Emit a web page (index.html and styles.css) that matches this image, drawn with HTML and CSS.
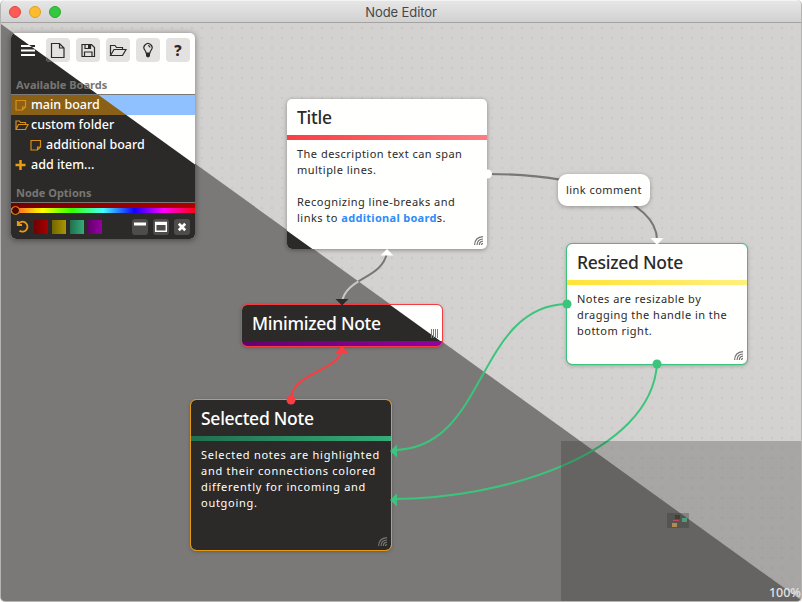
FILE: index.html
```html
<!DOCTYPE html>
<html lang="en">
<head>
<meta charset="utf-8">
<title>Node Editor</title>
<link rel="stylesheet" href="styles.css">
</head>
<body>
<div class="window">
  <header class="titlebar"><span class="lights"><i class="close"></i><i class="min"></i><i class="max"></i></span>Node Editor</header>
  <main class="canvas">
    <svg class="links" viewBox="0 0 802 602">
      <defs>
        <linearGradient id="grey" gradientUnits="userSpaceOnUse" x1="357" y1="281" x2="358" y2="280"><stop offset="0" stop-color="#c9c8c7"/><stop offset="1" stop-color="#787775"/></linearGradient>
      </defs>
      <path d="M488 174C580 174 657 200 657 240" stroke="#787775"/>
      <path d="M387 252C383 279 346 277 342 302" stroke="url(#grey)"/>
      <path d="M291 400C291 371 342 372 342 347" stroke="#fb3c41"/>
      <path d="M567 304C475 306 488 450 393 450" stroke="#3bc57c"/>
      <path d="M657 364C651 455 500 499 393 499" stroke="#3bc57c"/>
    </svg>

    <article class="note title-note">
      <h2>Title</h2><div class="bar red"></div>
      <p>The description text can span<br>multiple lines.<br><br>Recognizing line-breaks and<br>links to <b>additional board</b>s.</p>
      <svg class="grip" viewBox="0 0 9 9"><path d="M.6 9Q.8 1 9 .6M3 9Q3.2 3.3 9 3M5.3 9Q5.4 5.5 9 5.2M7.4 9Q7.5 7.6 9 7.3"/></svg>
    </article>
    <article class="note mini-note">
      <h2>Minimized Note</h2><div class="bar purple"></div>
      <svg class="grip bars" viewBox="0 0 8 9"><path d="M1.500 0V9M3.500 0V9M5.500 0V9M7.500 0V9"/></svg>
    </article>
    <article class="note selected-note">
      <h2>Selected Note</h2><div class="bar green"></div>
      <p>Selected notes are highlighted<br>and their connections colored<br>differently for incoming and<br>outgoing.</p>
      <svg class="grip" viewBox="0 0 9 9"><path d="M.6 9Q.8 1 9 .6M3 9Q3.2 3.3 9 3M5.3 9Q5.4 5.5 9 5.2M7.4 9Q7.5 7.6 9 7.3"/></svg>
    </article>
    <article class="note resized-note">
      <h2>Resized Note</h2><div class="bar yellow"></div>
      <p>Notes are resizable by<br>dragging the handle in the<br>bottom right.</p>
      <svg class="grip" viewBox="0 0 9 9"><path d="M.6 9Q.8 1 9 .6M3 9Q3.2 3.3 9 3M5.3 9Q5.4 5.5 9 5.2M7.4 9Q7.5 7.6 9 7.3"/></svg>
    </article>
    <div class="comment">link comment</div>

    <svg class="ports" viewBox="0 0 802 602">
      <g fill="#fffffe"><circle cx="487.500" cy="174" r="4.500"/><path d="M387 249L393.500 255.500H380.500ZM650.500 238H663.500L657 245Z"/></g>
      <path d="M335.500 299H348.500L342 305.500Z" fill="#2b2a28"/>
      <g fill="#fb3c41"><circle cx="291" cy="400" r="4.500"/><path d="M342 346L348.500 353H335.500Z"/></g>
      <g fill="#3bc57c"><circle cx="567" cy="304" r="4.500"/><circle cx="657" cy="364" r="4.500"/><path d="M390 451L397 444.500V457.500ZM390 500L397 493.500V506.500Z"/></g>
    </svg>

    <aside class="panel">
      <nav class="tools">
        <button class="menu"><svg viewBox="0 0 24 24"><defs><linearGradient id="split" gradientUnits="userSpaceOnUse" x1="12.700" y1="7.300" x2="13.300" y2="6.500"><stop offset="0" stop-color="#fff"/><stop offset="1" stop-color="#2b2a28"/></linearGradient></defs><path d="M5 8L19 8.010M5 12.500L19 12.510M5 17L19 17.010"/></svg></button>
        <button class="file"><svg viewBox="0 0 24 24"><path d="M5.500 5.500H13.500L18 10V19.500H5.500ZM13.500 5.500V10H18"/></svg></button>
        <button><svg viewBox="0 0 24 24"><path d="M6 6.500H15.500L18.500 9.500V18.500H6ZM9 6.500V10.500H14.500V6.500M8.500 18.500V14H16V18.500"/><path d="M12 7h2v3h-2z" class="fill"/></svg></button>
        <button><svg viewBox="0 0 24 24"><path d="M4.500 16.500V7.500H9L10.500 9.500H16.500V11.500M4.500 17.500L8 11.500H20L16.500 17.500Z"/></svg></button>
        <button><svg viewBox="0 0 24 24"><path d="M10 15Q10 13.500 9 12.300A4 4 0 1 1 15 12.300Q14 13.500 14 15ZM12 7.500Q13.800 7.700 14 9.500"/><path class="fill" d="M10 15H14V18L13 19.200H11L10 18Z"/></svg></button>
        <button class="help">?</button>
      </nav>
      <h3>Available Boards</h3>
      <ul>
        <li class="active"><svg viewBox="0 0 12 12"><path d="M1 1.500H10.500V8L7.500 11H1ZM7.500 11V8H10.500"/></svg><span>main board</span></li>
        <li><svg class="wide" viewBox="0 0 14 12"><path d="M1 10V2H4.500L5.500 3.500H10.500V5.500M1 10.500L3.500 5.500H13L10.500 10.500Z"/></svg><span>custom folder</span></li>
        <li class="child"><svg viewBox="0 0 12 12"><path d="M1 1.500H10.500V8L7.500 11H1ZM7.500 11V8H10.500"/></svg><span>additional board</span></li>
        <li><svg viewBox="0 0 12 12"><path class="plus" d="M5.500 1V11M.5 6H10.500"/></svg><span>add item...</span></li>
      </ul>
      <h3 class="options">Node Options</h3>
      <div class="shade"></div>
      <div class="hue"><i></i></div>
      <div class="footer">
        <svg class="undo" viewBox="0 0 14 14"><path d="M2.200 4A5 5 0 1 1 3.500 10.700M1.800 1V5H6"/></svg>
        <i class="swatch red"></i><i class="swatch olive"></i><i class="swatch green"></i><i class="swatch purple"></i>
        <span class="space"></span>
        <button><svg viewBox="0 0 16 16"><path class="fill" d="M2 3.500h12v3H2z"/></svg></button>
        <button><svg viewBox="0 0 16 16"><path d="M2.700 3.500H13.300V12.300H2.700Z"/><path class="fill" d="M2 3h12v3H2z"/></svg></button>
        <button><svg viewBox="0 0 16 16"><path class="x" d="M4.800 4.800L11.200 11.200M11.200 4.800L4.800 11.200"/></svg></button>
      </div>
    </aside>

    <div class="minimap">
      <div class="view"><i class="m1"></i><i class="m2"></i><i class="m3"></i><i class="m4"></i></div>
      <span>100%</span>
    </div>
  </main>
</div>
</body>
</html>
```
FILE: styles.css
```css
* { box-sizing: border-box; }
body { margin: 0; background: #fff; font-family: "Noto Sans", sans-serif; }
.window { position: relative; width: 802px; height: 602px; overflow: hidden; border-radius: 5px; border: 1px solid #b5b4b3; border-top: 0; background: #d3d2d0; }
.titlebar { height: 23px; margin: 0 -1px; border-top: 1px solid #f4f4f4; border-bottom: 1px solid #a5a3a1; background: linear-gradient(#e6e6e6, #d1d1d1); text-align: center; font: 13px/23px Inter, sans-serif; letter-spacing: -.1px; color: #474747; }
.lights { position: absolute; left: 8px; top: 6px; display: flex; gap: 8px; }
.lights i { width: 12px; height: 12px; border-radius: 50%; border: 1px solid #e2463f; background: #fc5b57; }
.lights .min { background: #fdbc2e; border-color: #dfa023; }
.lights .max { background: #34c840; border-color: #27aa31; }

/* Diagonal theme split: --x/--y hold each element's position in the window. */
.canvas::before, .note::before, .panel::before, .active::before, .file::before { content: ""; position: absolute; inset: 0; z-index: -1; background: #2b2a28; clip-path: polygon(calc(0px - var(--x)) calc(24px - var(--y)), calc(802px - var(--x)) calc(601.500px - var(--y)), calc(0px - var(--x)) calc(602px - var(--y))); }
.canvas { height: 579px; margin: 0 -1px; }
.canvas::before { --x: 0px; --y: 0px; z-index: 0; background: #7a7977; }
.canvas::after { content: ""; position: absolute; inset: 23px 0 0; background: radial-gradient(circle, rgba(120,120,120,.1) 1px, transparent 1.700px) -4px 0 / 10px 10px; }
.links, .ports { position: absolute; left: -1px; top: 0; width: 802px; height: 602px; z-index: 1; }
.links { fill: none; stroke-width: 2; }
.ports { z-index: 3; }

.note { position: absolute; left: calc(var(--x) - 1px); top: var(--y); z-index: 2; overflow: hidden; border-radius: 5px; background: #fffffe; color: #2b2a28; box-shadow: 0 1px 4px rgba(0,0,0,.35); }
.note h2 { margin: 0; padding: 0 10px; height: 36px; font-size: 17.500px; line-height: 37px; letter-spacing: -.27px; font-weight: 500; white-space: nowrap; }
.note p { margin: 0; padding: 6px 10px; font-size: 11px; line-height: 16px; letter-spacing: .48px; white-space: nowrap; }
.note b { color: #2e8cfb; letter-spacing: .3px; }
.bar { height: 5px; }
.grip { position: absolute; right: 4px; bottom: 4px; width: 9px; height: 9px; fill: none; stroke: #777573; stroke-width: 1.200; }
.grip.bars { width: 8px; bottom: 8px; stroke: #7c7b79; stroke-width: 1; }
.title-note { --x: 287px; --y: 99px; width: 200px; height: 150px; }
.mini-note { --x: 242px; --y: 305px; width: 200px; height: 41px; color: #fff; }
.selected-note { --x: 191px; --y: 400px; width: 200px; height: 150px; color: #fff; }
.selected-note p { letter-spacing: .73px; }
.resized-note { --x: 567px; --y: 244px; width: 180px; height: 120px; }
.mini-note, .selected-note, .resized-note { outline: 1px solid #3bc57c; }
.mini-note { outline-color: #f43c42; }
.selected-note { outline-color: #e29a15; }
.bar.red { background: linear-gradient(90deg, #fa3e43, #ff7c80); }
.bar.purple { background: linear-gradient(90deg, #65006d, #9500a3); }
.bar.green { background: linear-gradient(90deg, #20704e, #35ac79); }
.bar.yellow { background: linear-gradient(90deg, #ffe338, #fff07c); }
.comment { position: absolute; left: 557px; top: 174px; z-index: 3; width: 92px; height: 32px; border-radius: 9px; background: #fffffe; color: #2b2a28; text-align: center; font-size: 11px; line-height: 32px; letter-spacing: .45px; box-shadow: 0 1px 4px rgba(0,0,0,.3); }

.panel { --x: 11px; --y: 33px; position: absolute; left: 10px; top: 33px; z-index: 5; width: 184px; height: 206px; overflow: hidden; border-radius: 5px; background: #fffffe; box-shadow: 0 1px 6px rgba(0,0,0,.45); color: #fff; }
button { border: 0; padding: 0; font: inherit; }
.tools { display: flex; gap: 6px; padding: 5px 5px 0; height: 43px; }
.tools button { width: 24px; height: 24px; border-radius: 4px; background: #e3e2e1; color: #2b2a28; }
.tools .menu { background: none; }
.file { --x: 46px; --y: 38px; position: relative; z-index: 0; overflow: hidden; }
.file::before { background: #4d4c4a; }
.tools svg { display: block; width: 24px; height: 24px; fill: none; stroke: #2b2a28; stroke-width: 1.200; }
.tools .menu path { stroke: url(#split); stroke-width: 2.200; }
.tools .help { font-size: 15px; line-height: 24px; font-weight: 800; }
svg .fill { fill: currentColor; stroke: none; }
h3 { margin: 0; height: 19px; padding-left: 5px; border-bottom: 1px solid #7a7977; color: #777674; font-size: 11px; line-height: 18px; font-weight: 700; }
ul { list-style: none; margin: 0; padding: 0; height: 87px; }
li { position: relative; z-index: 0; display: flex; align-items: center; gap: 4px; height: 20px; padding-left: 4px; font-size: 12.500px; line-height: 19px; font-weight: 500; white-space: nowrap; }
li span { height: 20px; }
li svg { width: 12px; height: 12px; fill: none; stroke: #d88e17; stroke-width: 1.200; }
li .wide { width: 14px; margin-right: -2px; }
li .plus { stroke: #e99b12; stroke-width: 2.500; }
.child { padding-left: 19px; }
.active { --x: 11px; --y: 95px; background: #8fc0ff; }
.active::before { background: #8a6016; }
.panel::before { z-index: 0; }
.panel > * { position: relative; z-index: 1; }
.options { height: 20px; line-height: 19px; margin-top: 1px; }
.shade { height: 5px; background: linear-gradient(90deg, #710000, #ae0000); }
.hue { position: relative; height: 5px; background: linear-gradient(90deg, #f43, #ff0 17%, #3f0 33%, #4ff 50%, #10f 67%, #f0f 83%, #f01); }
.panel .hue { z-index: 2; }
.hue i { position: absolute; left: 0; top: -2px; width: 9px; height: 9px; border: 1px solid #e99b12; border-radius: 50%; background: #4b0800; }
.footer { display: flex; align-items: center; gap: 4px; height: 26px; padding: 2px 5px 0; }
.undo { width: 14px; height: 14px; fill: none; stroke: #e99b12; stroke-width: 1.800; }
.swatch { width: 14px; height: 14px; }
.swatch.red { background: linear-gradient(90deg, #710000, #a90000); }
.swatch.olive { background: linear-gradient(90deg, #746600, #aa9600); }
.swatch.green { background: linear-gradient(90deg, #20704e, #35ac79); }
.swatch.purple { background: linear-gradient(90deg, #65006d, #9500a3); }
.space { flex: 1; }
.footer button { width: 16px; height: 16px; border-radius: 3px; background: #4d4c4a; color: #fff; margin-left: 1px; }
.footer button svg { display: block; fill: none; stroke: #fff; stroke-width: 1.500; }
.footer .x { stroke-width: 2.700; }

.minimap { position: absolute; z-index: 4; left: 560px; top: 441px; width: 241px; height: 161px; background: rgba(43,42,40,.26); }
.minimap .view { position: absolute; left: 106px; top: 72px; width: 22px; height: 15px; background: rgba(43,42,40,.28); }
.view i { position: absolute; }
.m1 { left: 8px; top: 2px; width: 5px; height: 4px; background: #403f3e; }
.m2 { left: 6px; top: 7px; width: 6px; height: 1px; background: #bd4c54; }
.m3 { left: 15px; top: 5px; width: 5px; height: 4px; background: #519b76; }
.m4 { left: 5px; top: 10px; width: 5px; height: 4px; background: #b18b50; }
.minimap span { position: absolute; right: 1px; bottom: 2px; color: #e3e3e3; font-size: 12.500px; line-height: 15px; font-weight: 500; }
```
